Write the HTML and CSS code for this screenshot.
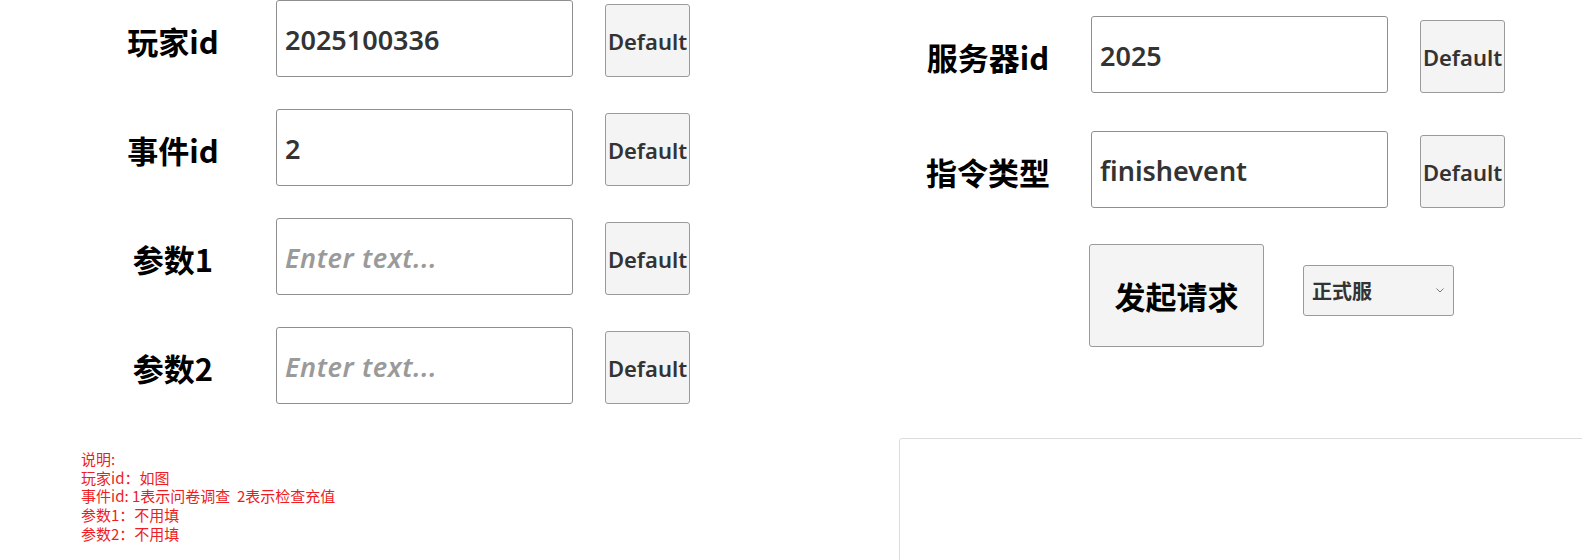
FILE: index.html
```html
<!DOCTYPE html>
<html lang="zh-CN">
<head>
<meta charset="utf-8">
<title>事件工具</title>
<link rel="stylesheet" href="styles.css">
</head>
<body>
<div class="page">
  <div class="col col-left">
    <div class="row">
      <label class="label">玩家id</label>
      <input class="field" type="text" value="2025100336">
      <button class="btn-default">Default</button>
    </div>
    <div class="row">
      <label class="label">事件id</label>
      <input class="field" type="text" value="2">
      <button class="btn-default">Default</button>
    </div>
    <div class="row">
      <label class="label">参数1</label>
      <input class="field" type="text" placeholder="Enter text...">
      <button class="btn-default">Default</button>
    </div>
    <div class="row">
      <label class="label">参数2</label>
      <input class="field" type="text" placeholder="Enter text...">
      <button class="btn-default">Default</button>
    </div>
    <div class="notes">
      <div>说明:</div>
      <div>玩家id：如图</div>
      <div>事件id: 1表示问卷调查&nbsp;&nbsp;2表示检查充值</div>
      <div>参数1：不用填</div>
      <div>参数2：不用填</div>
    </div>
  </div>
  <div class="col col-right">
    <div class="row row-wide">
      <label class="label">服务器id</label>
      <input class="field" type="text" value="2025">
      <button class="btn-default">Default</button>
    </div>
    <div class="row row-wide">
      <label class="label">指令类型</label>
      <input class="field" type="text" value="finishevent">
      <button class="btn-default">Default</button>
    </div>
    <div class="actions">
      <button class="btn-submit">发起请求</button>
      <div class="select-wrap">
        <select class="select">
          <option>正式服</option>
          <option>测试服</option>
        </select>
        <svg class="chev" width="8" height="5" viewBox="0 0 8 5"><path d="M0.5 0.5 L4 4 L7.5 0.5" fill="none" stroke="#777" stroke-width="1"/></svg>
      </div>
    </div>
    <div class="output"></div>
  </div>
</div>
</body>
</html>
```

FILE: styles.css
```css
html, body {
  margin: 0;
  padding: 0;
  background: #fff;
  overflow: hidden;
}
body {
  font-family: "Noto Sans CJK SC", "Noto Sans", sans-serif;
}
.page {
  display: flex;
  width: 1582px;
  height: 560px;
  padding-left: 73px;
  box-sizing: border-box;
}
.col {
  display: flex;
  flex-direction: column;
  width: 815px;
  flex: none;
}
.col-right {
  padding-top: 16px;
}
.row {
  display: flex;
  align-items: flex-end;
  margin-bottom: 32px;
}
.row-wide {
  margin-bottom: 38px;
}
.row-wide + .actions {
  margin-top: -2px;
}
.label {
  width: 200px;
  align-self: center;
  text-align: center;
  font-size: 31px;
  font-weight: 700;
  color: #000;
  padding-top: 4px;
}
.field {
  width: 297px;
  height: 77px;
  box-sizing: border-box;
  margin-left: 3px;
  border: 1px solid #8f8f8f;
  border-radius: 3px;
  padding: 1px 0 0 8px;
  font-family: "Noto Sans", "Noto Sans CJK SC", sans-serif;
  font-size: 27px;
  font-weight: 600;
  color: #333;
  background: #fff;
  outline: none;
}
.field::placeholder {
  color: #9a9a9a;
  font-style: italic;
  letter-spacing: 0.6px;
}
.btn-default {
  width: 85px;
  height: 73px;
  margin-left: 32px;
  padding: 0;
  box-sizing: border-box;
  border: 1px solid #9a9a9a;
  border-radius: 3px;
  background: #f4f4f4;
  font-family: "Noto Sans", "Noto Sans CJK SC", sans-serif;
  font-size: 22px;
  font-weight: 600;
  color: #333;
}
.actions {
  display: flex;
  align-items: center;
  margin-left: 201px;
}
.btn-submit {
  width: 175px;
  height: 103px;
  box-sizing: border-box;
  border: 1px solid #9a9a9a;
  border-radius: 3px;
  background: #f4f4f4;
  font-family: "Noto Sans CJK SC", "Noto Sans", sans-serif;
  font-size: 31px;
  font-weight: 700;
  color: #000;
  padding: 0;
}
.select-wrap {
  position: relative;
  margin-left: 39px;
  margin-top: -10px;
}
.select {
  appearance: none;
  -webkit-appearance: none;
  width: 151px;
  height: 51px;
  box-sizing: border-box;
  border: 1px solid #9a9a9a;
  border-radius: 3px;
  background: #f4f4f4;
  padding: 0 0 0 8px;
  font-family: "Noto Sans CJK SC", "Noto Sans", sans-serif;
  font-size: 20px;
  font-weight: 700;
  color: #333;
  outline: none;
}
.chev {
  position: absolute;
  right: 10px;
  top: 23px;
  pointer-events: none;
}
.notes {
  margin-top: 14px;
  margin-left: 8px;
  font-family: "Noto Sans CJK SC", sans-serif;
  font-size: 15px;
  line-height: 18.7px;
  color: #ee1c24;
}
.output {
  margin-top: 91px;
  margin-left: 11px;
  width: 760px;
  height: 200px;
  flex: none;
  border: 1px solid #dcdcdc;
  border-radius: 3px;
  background: #fff;
}
```
